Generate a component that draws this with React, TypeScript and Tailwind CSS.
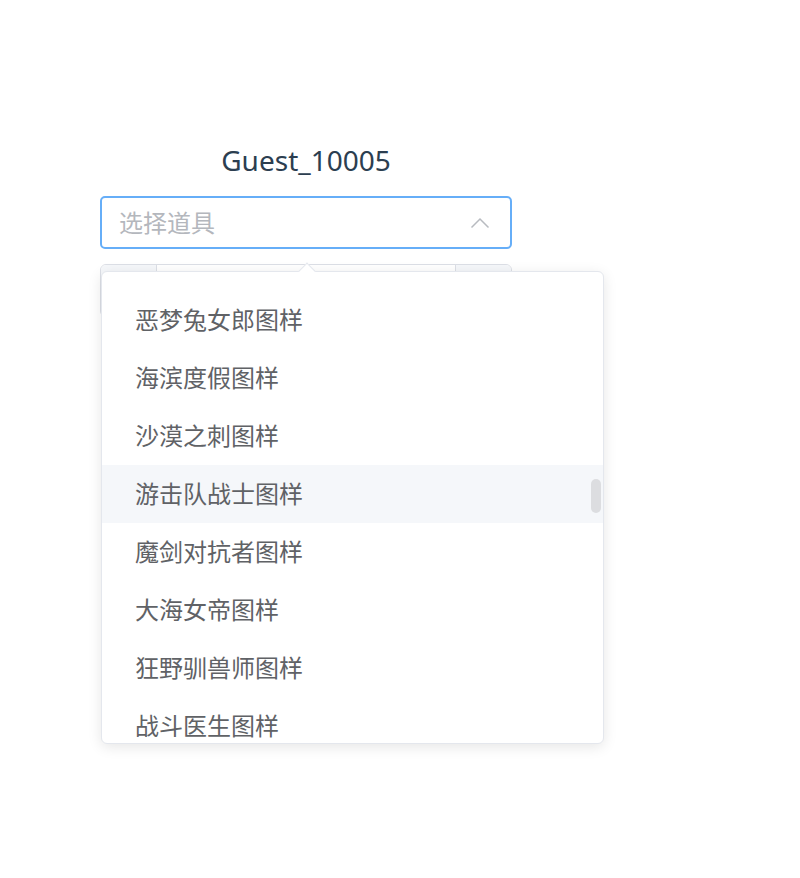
import { useState } from "react";

const items = [
  "恶梦兔女郎图样",
  "海滨度假图样",
  "沙漠之刺图样",
  "游击队战士图样",
  "魔剑对抗者图样",
  "大海女帝图样",
  "狂野驯兽师图样",
  "战斗医生图样",
];

export default function App() {
  const [hover] = useState(3);

  return (
    <div
      className="min-h-[878px] bg-white"
      style={{ fontFamily: '"Noto Sans", "Noto Sans CJK SC", sans-serif' }}
    >
      <div className="ml-[100px] w-[412px] pt-[140px]">
        {/* Name */}
        <div className="text-center text-[28px] leading-[40px] text-[#2c3e50]">Guest_10005</div>

        {/* Select */}
        <div className="mt-[16px] flex h-[53px] items-center justify-between rounded-[5px] border-2 border-[#66aef8] pl-[17px] pr-[20px]">
          <span className="text-[24px] text-[#b4b7bd]">选择道具</span>
          <svg width="20" height="12" viewBox="0 0 20 12" fill="none">
            <polyline points="1.5,10.5 10,2 18.5,10.5" stroke="#b8bbc0" strokeWidth="1.5" />
          </svg>
        </div>

        {/* Input number behind the popup */}
        <div className="relative mt-[15px]">
          <div className="flex h-[53px] overflow-hidden rounded-[6px] border border-[#dcdfe6]">
            <div className="w-[56px] border-r border-[#dcdfe6] bg-[#f5f7fa]" />
            <div className="flex-1 bg-white" />
            <div className="w-[56px] border-l border-[#dcdfe6] bg-[#f5f7fa]" />
          </div>

          {/* Dropdown */}
          <div className="absolute left-[1px] top-[7px] h-[473px] w-[503px] rounded-[6px] border border-[#e4e7ed] bg-white shadow-[0_3px_14px_rgba(0,0,0,0.1)]">
            <div className="absolute left-[199px] top-[-7px] h-[12px] w-[12px] rotate-45 border-l border-t border-[#e4e7ed] bg-white" />
            <div className="relative h-full overflow-hidden rounded-[6px] pt-[19px]">
              {items.map((label, i) => (
                <div
                  key={label}
                  className={`flex h-[58px] items-center pl-[33px] text-[24px] text-[#606266] ${
                    i === hover ? "bg-[#f5f7fa]" : ""
                  }`}
                >
                  {label}
                </div>
              ))}
              <div className="absolute left-[489px] top-[207px] h-[34px] w-[10px] rounded-full bg-[#dcdde0]" />
            </div>
          </div>
        </div>
      </div>
    </div>
  );
}
